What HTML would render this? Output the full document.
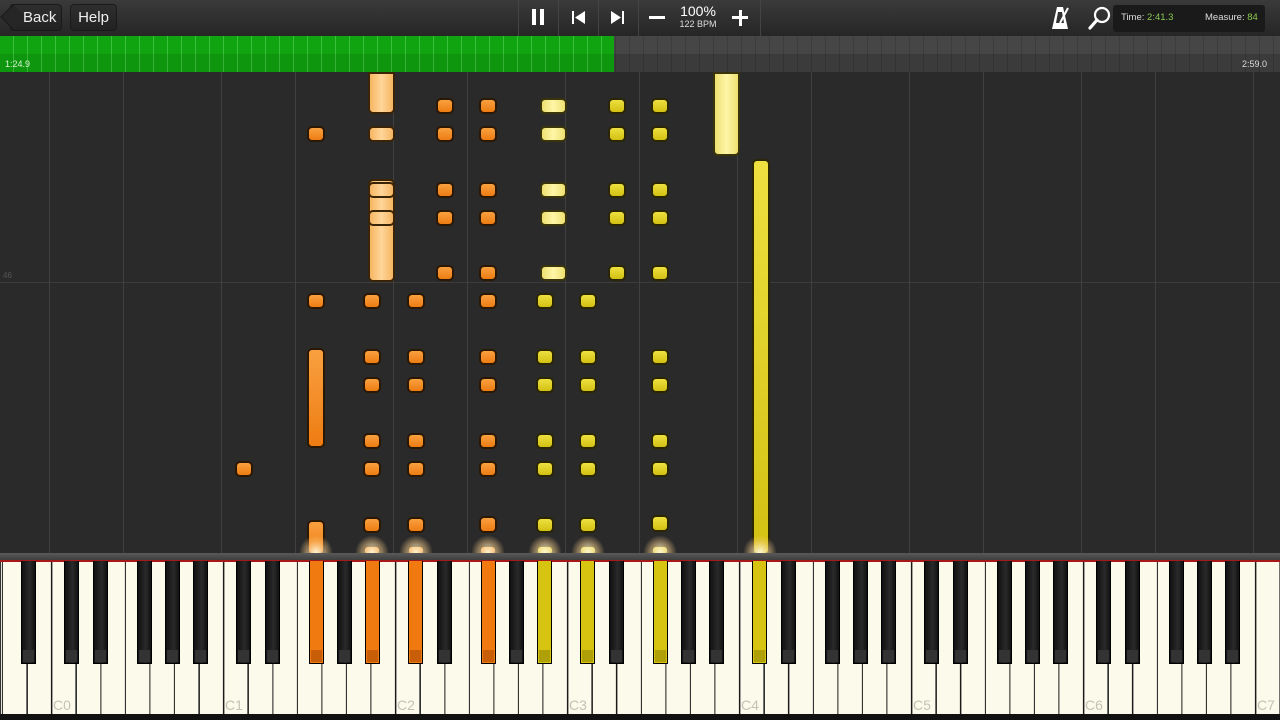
<!DOCTYPE html>
<html><head><meta charset="utf-8"><style>
*{margin:0;padding:0;box-sizing:border-box}
body{width:1280px;height:720px;overflow:hidden;background:#2a2a2a;font-family:"Liberation Sans",sans-serif;position:relative}
.a{position:absolute}
#top{left:0;top:0;width:1280px;height:36px;background:linear-gradient(#3a3a3a,#262626)}
.btn{position:absolute;top:4px;height:27px;border-radius:4px;background:linear-gradient(#2e2e2e,#222);border:1px solid #1a1a1a;color:#eee;font-size:15px;line-height:25px;text-align:center}
.sep{position:absolute;top:0;width:1px;height:36px;background:#1c1c1c;border-right:1px solid #444}
#prog{left:0;top:36px;width:1280px;height:36px;background:repeating-linear-gradient(90deg,#464646 0 13px,#3c3c3c 13px 14px);}
#prog:after{content:"";position:absolute;left:0;top:18px;width:1280px;height:18px;background:rgba(0,0,0,.15)}
#green{left:0;top:36px;width:614px;height:36px;background:repeating-linear-gradient(90deg,#10a410 0 13px,#3cc03c 13px 14px);z-index:1}
#green:after{content:"";position:absolute;left:0;top:18px;width:614px;height:18px;background:rgba(0,0,0,.08)}
.vl{position:absolute;top:72px;width:1px;height:481px;background:#404040}
.n{position:absolute;border-radius:5px;border:2px solid #2a1804;}
.o{background:linear-gradient(#f9a040,#ee7c12)}
.po{background:linear-gradient(90deg,#f6b560,#ffd69a,#f6b560);border-color:#3a2408}
.y{background:linear-gradient(#eee040,#d2c012);border-color:#2a2604}
.py{background:linear-gradient(90deg,#ede070,#fff6a8,#ede070);border-color:#3a340c}
.bk{position:absolute;top:561px;width:15px;height:103px;background:linear-gradient(90deg,#111,#2a2a2a 60%,#111);border:1px solid #000;border-top:none}
.bk:after{content:"";position:absolute;left:1px;right:1px;bottom:1px;height:12px;background:#333}
.bo{background:#f07a10}.bo:after{background:#c85e08}
.by{background:#d6c410}.by:after{background:#b0a008}
.lab{position:absolute;top:697px;font-size:14px;color:#c4c2b4}
.fl{position:absolute;top:535px;width:34px;height:22px;background:radial-gradient(ellipse at 50% 80%,rgba(255,250,220,.95),rgba(255,210,140,.4) 45%,rgba(255,200,120,0) 70%)}
</style></head><body>
<div id="top" class="a"></div>
<div class="btn" style="left:10px;width:52px;border-radius:3px 4px 4px 3px"></div>
<div class="a" style="left:4px;top:8px;width:18px;height:18px;transform:rotate(45deg);background:#262626;border-left:1px solid #1a1a1a;border-bottom:1px solid #1a1a1a"></div>
<div class="a" style="left:23px;top:4px;color:#eee;font-size:15px;line-height:27px">Back</div>
<div class="btn" style="left:70px;width:47px">Help</div>
<div class="sep" style="left:518px"></div><div class="sep" style="left:558px"></div><div class="sep" style="left:598px"></div><div class="sep" style="left:638px"></div><div class="sep" style="left:760px"></div>
<div class="a" style="left:532px;top:9px;width:4px;height:16px;background:#fff"></div>
<div class="a" style="left:540px;top:9px;width:4px;height:16px;background:#fff"></div>
<svg class="a" style="left:572px;top:11px" width="14" height="13"><rect x="0" y="0" width="2" height="13" fill="#fff"/><polygon points="3,6.5 13,0 13,13" fill="#fff"/></svg>
<svg class="a" style="left:611px;top:11px" width="14" height="13"><polygon points="0,0 10,6.5 0,13" fill="#fff"/><rect x="11" y="0" width="2" height="13" fill="#fff"/></svg>
<div class="a" style="left:649px;top:16px;width:16px;height:3px;background:#fff"></div>
<div class="a" style="left:732px;top:16px;width:16px;height:3px;background:#fff"></div>
<div class="a" style="left:738.5px;top:9.5px;width:3px;height:16px;background:#fff"></div>
<div class="a" style="left:672px;top:4px;width:52px;text-align:center;color:#fff;font-size:14px;line-height:15px">100%</div>
<div class="a" style="left:672px;top:19px;width:52px;text-align:center;color:#ddd;font-size:9px">122 BPM</div>
<svg class="a" style="left:1051px;top:6px" width="20" height="24"><polygon points="6,1 12,1 17,23 1,23" fill="#fff"/><polygon points="7,6 11,6 13,17 5,17" fill="#333"/><line x1="9" y1="17" x2="17" y2="2" stroke="#fff" stroke-width="2"/></svg>
<svg class="a" style="left:1088px;top:5px" width="24" height="26"><circle cx="14" cy="10" r="7" fill="none" stroke="#fff" stroke-width="2.2"/><line x1="9" y1="15" x2="2" y2="23" stroke="#fff" stroke-width="3.2" stroke-linecap="round"/></svg>
<div class="a" style="left:1113px;top:5px;width:152px;height:27px;background:#1a1a1a;border-radius:3px"></div>
<div class="a" style="left:1121px;top:12px;font-size:9.5px;color:#ddd">Time: <span style="color:#8cc850">2:41.3</span></div>
<div class="a" style="left:1205px;top:12px;font-size:9.5px;color:#ddd">Measure: <span style="color:#8cc850">84</span></div>
<div id="prog" class="a"></div>
<div id="green" class="a"></div>
<div class="a" style="left:5px;top:59px;font-size:9px;color:#d8f0d0;z-index:2">1:24.9</div>
<div class="a" style="left:1242px;top:59px;font-size:9px;color:#ddd;z-index:2">2:59.0</div>
<div class="a" style="left:0;top:282px;width:1280px;height:1px;background:#3c3c3c"></div>
<div class="a" style="left:3px;top:271px;font-size:8px;color:#555">46</div>
<div class="vl" style="left:49px"></div><div class="vl" style="left:123px"></div>
<div class="vl" style="left:221px"></div><div class="vl" style="left:295px"></div>
<div class="vl" style="left:393px"></div><div class="vl" style="left:467px"></div>
<div class="vl" style="left:565px"></div><div class="vl" style="left:639px"></div>
<div class="vl" style="left:737px"></div><div class="vl" style="left:811px"></div>
<div class="vl" style="left:909px"></div><div class="vl" style="left:983px"></div>
<div class="vl" style="left:1081px"></div><div class="vl" style="left:1155px"></div>
<div class="vl" style="left:1253px"></div>
<div class="n o" style="left:235px;top:461px;width:18px;height:16px"></div>
<div class="n o" style="left:307px;top:126px;width:18px;height:16px"></div>
<div class="n o" style="left:307px;top:293px;width:18px;height:16px"></div>
<div class="n o" style="left:307px;top:348px;width:18px;height:100px"></div>
<div class="n o" style="left:307px;top:520px;width:18px;height:35px"></div>
<div class="n po" style="left:368px;top:72px;width:27px;height:42px;border-radius:0 0 5px 5px"></div>
<div class="n po" style="left:368px;top:126px;width:27px;height:16px"></div>
<div class="n po" style="left:368px;top:179px;width:27px;height:103px"></div>
<div class="n po" style="left:368px;top:182px;width:27px;height:16px"></div>
<div class="n po" style="left:368px;top:210px;width:27px;height:16px"></div>
<div class="n py" style="left:713px;top:72px;width:27px;height:84px;border-radius:0 0 5px 5px"></div>
<div class="n y" style="left:752px;top:159px;width:18px;height:396px"></div>
<div class="n o" style="left:363px;top:293px;width:18px;height:16px"></div><div class="n o" style="left:363px;top:349px;width:18px;height:16px"></div><div class="n o" style="left:363px;top:377px;width:18px;height:16px"></div><div class="n o" style="left:363px;top:433px;width:18px;height:16px"></div><div class="n o" style="left:363px;top:461px;width:18px;height:16px"></div><div class="n o" style="left:363px;top:517px;width:18px;height:16px"></div>
<div class="n o" style="left:407px;top:293px;width:18px;height:16px"></div><div class="n o" style="left:407px;top:349px;width:18px;height:16px"></div><div class="n o" style="left:407px;top:377px;width:18px;height:16px"></div><div class="n o" style="left:407px;top:433px;width:18px;height:16px"></div><div class="n o" style="left:407px;top:461px;width:18px;height:16px"></div><div class="n o" style="left:407px;top:517px;width:18px;height:16px"></div>
<div class="n o" style="left:436px;top:98px;width:18px;height:16px"></div><div class="n o" style="left:436px;top:126px;width:18px;height:16px"></div><div class="n o" style="left:436px;top:182px;width:18px;height:16px"></div><div class="n o" style="left:436px;top:210px;width:18px;height:16px"></div><div class="n o" style="left:436px;top:265px;width:18px;height:16px"></div>
<div class="n o" style="left:479px;top:98px;width:18px;height:16px"></div><div class="n o" style="left:479px;top:126px;width:18px;height:16px"></div><div class="n o" style="left:479px;top:182px;width:18px;height:16px"></div><div class="n o" style="left:479px;top:210px;width:18px;height:16px"></div><div class="n o" style="left:479px;top:265px;width:18px;height:16px"></div><div class="n o" style="left:479px;top:293px;width:18px;height:16px"></div><div class="n o" style="left:479px;top:349px;width:18px;height:16px"></div><div class="n o" style="left:479px;top:377px;width:18px;height:16px"></div><div class="n o" style="left:479px;top:433px;width:18px;height:16px"></div><div class="n o" style="left:479px;top:461px;width:18px;height:16px"></div><div class="n o" style="left:479px;top:516px;width:18px;height:17px"></div>
<div class="n y" style="left:536px;top:293px;width:18px;height:16px"></div><div class="n y" style="left:536px;top:349px;width:18px;height:16px"></div><div class="n y" style="left:536px;top:377px;width:18px;height:16px"></div><div class="n y" style="left:536px;top:433px;width:18px;height:16px"></div><div class="n y" style="left:536px;top:461px;width:18px;height:16px"></div><div class="n y" style="left:536px;top:517px;width:18px;height:16px"></div>
<div class="n py" style="left:540px;top:98px;width:27px;height:16px"></div><div class="n py" style="left:540px;top:126px;width:27px;height:16px"></div><div class="n py" style="left:540px;top:182px;width:27px;height:16px"></div><div class="n py" style="left:540px;top:210px;width:27px;height:16px"></div><div class="n py" style="left:540px;top:265px;width:27px;height:16px"></div>
<div class="n y" style="left:579px;top:293px;width:18px;height:16px"></div><div class="n y" style="left:579px;top:349px;width:18px;height:16px"></div><div class="n y" style="left:579px;top:377px;width:18px;height:16px"></div><div class="n y" style="left:579px;top:433px;width:18px;height:16px"></div><div class="n y" style="left:579px;top:461px;width:18px;height:16px"></div><div class="n y" style="left:579px;top:517px;width:18px;height:16px"></div>
<div class="n y" style="left:608px;top:98px;width:18px;height:16px"></div><div class="n y" style="left:608px;top:126px;width:18px;height:16px"></div><div class="n y" style="left:608px;top:182px;width:18px;height:16px"></div><div class="n y" style="left:608px;top:210px;width:18px;height:16px"></div><div class="n y" style="left:608px;top:265px;width:18px;height:16px"></div>
<div class="n y" style="left:651px;top:98px;width:18px;height:16px"></div><div class="n y" style="left:651px;top:126px;width:18px;height:16px"></div><div class="n y" style="left:651px;top:182px;width:18px;height:16px"></div><div class="n y" style="left:651px;top:210px;width:18px;height:16px"></div><div class="n y" style="left:651px;top:265px;width:18px;height:16px"></div><div class="n y" style="left:651px;top:349px;width:18px;height:16px"></div><div class="n y" style="left:651px;top:377px;width:18px;height:16px"></div><div class="n y" style="left:651px;top:433px;width:18px;height:16px"></div><div class="n y" style="left:651px;top:461px;width:18px;height:16px"></div><div class="n y" style="left:651px;top:515px;width:18px;height:17px"></div>
<div class="n o" style="left:363px;top:545px;width:18px;height:11px"></div><div class="n o" style="left:407px;top:545px;width:18px;height:11px"></div><div class="n o" style="left:479px;top:545px;width:18px;height:11px"></div><div class="n y" style="left:536px;top:545px;width:18px;height:11px"></div><div class="n y" style="left:579px;top:545px;width:18px;height:11px"></div><div class="n y" style="left:651px;top:545px;width:18px;height:11px"></div>
<div class="fl" style="left:299px"></div><div class="fl" style="left:355px"></div><div class="fl" style="left:399px"></div><div class="fl" style="left:471px"></div><div class="fl" style="left:528px"></div><div class="fl" style="left:571px"></div><div class="fl" style="left:643px"></div><div class="fl" style="left:743px"></div>
<div class="a" style="left:0;top:553px;width:1280px;height:7px;background:linear-gradient(#5a5a5a,#3e3e3e)"></div>
<div class="a" style="left:0;top:560px;width:1280px;height:2px;background:#a81818"></div>
<div class="a" style="left:0;top:562px;width:1280px;height:154px;background:repeating-linear-gradient(90deg,#1a1a1a 0 1.2px,#fcfaea 1.2px 24.57px);background-position:1.9px 0"></div>
<div class="a" style="left:0;top:714px;width:1280px;height:6px;background:#111"></div>
<div class="lab" style="left:53px">C0</div><div class="lab" style="left:225px">C1</div><div class="lab" style="left:397px">C2</div><div class="lab" style="left:569px">C3</div><div class="lab" style="left:741px">C4</div><div class="lab" style="left:913px">C5</div><div class="lab" style="left:1085px">C6</div><div class="lab" style="left:1257px">C7</div>
<div class="bk" style="left:21px"></div>
<div class="bk" style="left:64px"></div><div class="bk" style="left:93px"></div><div class="bk" style="left:137px"></div><div class="bk" style="left:165px"></div><div class="bk" style="left:193px"></div>
<div class="bk" style="left:236px"></div><div class="bk" style="left:265px"></div><div class="bk bo" style="left:309px"></div><div class="bk" style="left:337px"></div><div class="bk bo" style="left:365px"></div>
<div class="bk bo" style="left:408px"></div><div class="bk" style="left:437px"></div><div class="bk bo" style="left:481px"></div><div class="bk" style="left:509px"></div><div class="bk by" style="left:537px"></div>
<div class="bk by" style="left:580px"></div><div class="bk" style="left:609px"></div><div class="bk by" style="left:653px"></div><div class="bk" style="left:681px"></div><div class="bk" style="left:709px"></div>
<div class="bk by" style="left:752px"></div><div class="bk" style="left:781px"></div><div class="bk" style="left:825px"></div><div class="bk" style="left:853px"></div><div class="bk" style="left:881px"></div>
<div class="bk" style="left:924px"></div><div class="bk" style="left:953px"></div><div class="bk" style="left:997px"></div><div class="bk" style="left:1025px"></div><div class="bk" style="left:1053px"></div>
<div class="bk" style="left:1096px"></div><div class="bk" style="left:1125px"></div><div class="bk" style="left:1169px"></div><div class="bk" style="left:1197px"></div><div class="bk" style="left:1225px"></div>
</body></html>
